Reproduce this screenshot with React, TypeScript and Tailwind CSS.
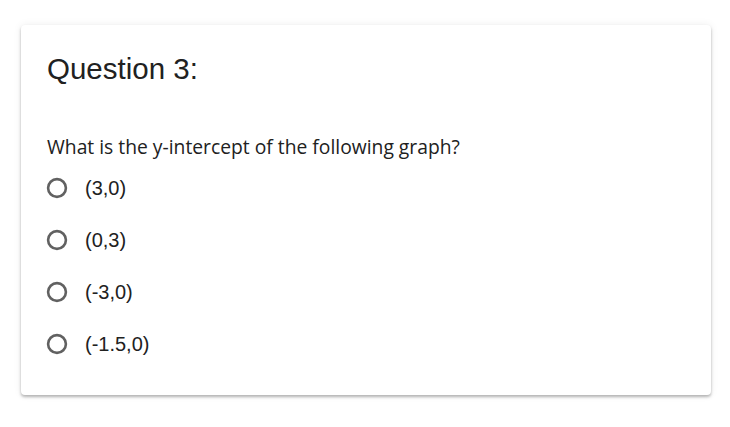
import React from "react";

const options = ["(3,0)", "(0,3)", "(-3,0)", "(-1.5,0)"];

export default function App() {
  return (
    <div className="w-[730px] h-[427px] bg-white pt-[25px] pl-[21px]">
      <div className="w-[690px] h-[370px] bg-white rounded-[4px] shadow-[0_2px_3px_rgba(0,0,0,0.28),0_0_8px_rgba(0,0,0,0.07)] pl-[26px] pt-[24px]">
        <h2 className="text-[29.5px] leading-[40px] text-[#212121] font-['Liberation_Sans',Arial,sans-serif]">
          Question 3:
        </h2>
        <p className="mt-[44px] text-[19.3px] leading-[28px] text-[#212121] font-['Open_Sans',sans-serif]">
          What is the y-intercept of the following graph?
        </p>
        <div className="flex flex-col mt-[17px] gap-[32px]">
          {options.map((o) => (
            <label key={o} className="flex items-center h-[20px]">
              <svg width="22" height="22" viewBox="0 0 22 22" className="shrink-0 -ml-[1px]">
                <circle cx="11" cy="11" r="8.9" fill="none" stroke="#616161" strokeWidth="2.6" />
              </svg>
              <span className="ml-[17px] text-[20px] leading-[24px] text-[#212121] font-['Liberation_Sans',Arial,sans-serif]">
                {o}
              </span>
            </label>
          ))}
        </div>
      </div>
    </div>
  );
}
